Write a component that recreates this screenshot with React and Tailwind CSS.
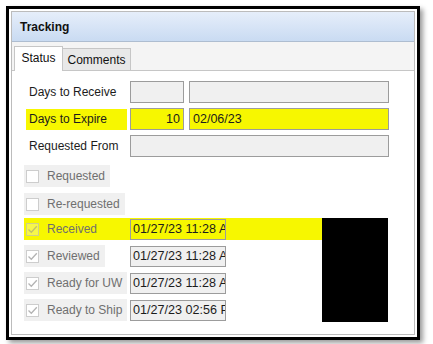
import React from 'react';

const font = { fontFamily: '"Liberation Sans", Arial, sans-serif' };

function Check({ checked, onYellow }) {
    return (
        <div className={`w-[13px] h-[13px] border flex items-center justify-center ${onYellow ? 'border-[#cfcf8a] bg-[#f7f74a]' : 'border-[#cdcdcd] bg-white'}`}>
            {checked && (
                <svg width="11" height="11" viewBox="0 0 11 11">
                    <path d="M1.5 5.5 L4.3 8.3 L9.8 2.2" fill="none" stroke={onYellow ? '#c2c26a' : '#b4b4b4'} strokeWidth="1.3" />
                </svg>
            )}
        </div>
    )
}

function CheckRow({ label, checked, date, highlight, className }) {
    return (
        <div className={`flex flex-row items-center h-[22px] ${highlight ? 'bg-[#f7f700]' : ''} ${className || ''}`}>
            <div className='w-[106px] h-full flex'>
                <div className={`h-full flex flex-row items-center pl-[2px] pr-[5px] ${highlight ? '' : 'bg-[#f0f0f0]'}`}>
                    <Check checked={checked} onYellow={highlight} />
                    <span className='ml-[8px] text-[12px] text-[#6f6f6f] whitespace-nowrap'>{label}</span>
                </div>
            </div>
            {date && (
                <div className={`w-[96px] h-[21px] border border-[#9c9c9c] overflow-hidden whitespace-nowrap flex items-center pl-[2px] text-[12.6px] text-[#1c1c1c] ${highlight ? 'bg-[#f7f700]' : 'bg-[#f0f0f0]'}`}>
                    {date}
                </div>
            )}
        </div>
    )
}

function FieldRow({ label, highlight, children, className }) {
    return (
        <div className={`flex flex-row items-center ml-[2px] ${className || ''}`}>
            <div className={`w-[101px] h-[21px] flex items-center pl-[3px] text-[12px] text-[#1c1c1c] ${highlight ? 'bg-[#f7f700]' : ''}`}>{label}</div>
            {children}
        </div>
    )
}

export default function App() {
    const box = 'h-[22px] border border-[#9c9c9c] flex items-center text-[12.5px] text-[#1c1c1c]'
    return (
        <div className='w-[433px] h-[344px] bg-white pt-[6px] pl-[6px]' style={font}>
            <div className='w-[414px] h-[334px] border-[3px] border-black p-[2px] bg-white shadow-[3px_3px_5px_rgba(0,0,0,0.4)]'>
                <div className='h-full border border-[#bcbcbc] flex flex-col'>
                    {/* title bar */}
                    <div className='h-[30px] border-b border-[#aebdd0] bg-gradient-to-b from-[#e6eefa] to-[#c9dbf2] flex items-center pl-[8px]'>
                        <span className='font-bold text-[12px] text-[#111]'>Tracking</span>
                    </div>

                    {/* tabs */}
                    <div className='h-[29px] border-b border-[#c6c6c6] bg-[#f4f4f4] flex flex-row items-end pl-[2px]'>
                        <div className='h-[25px] w-[49px] bg-white border border-b-0 border-[#c6c6c6] flex items-center justify-center text-[12px] text-[#111] mb-[-1px] pb-[3px]'>Status</div>
                        <div className='h-[22px] w-[68px] bg-[#e8e8e8] border border-b-0 border-l-0 border-[#c6c6c6] flex items-center justify-center text-[12px] text-[#111]'>Comments</div>
                    </div>

                    {/* content */}
                    <div className='flex-1 bg-white pt-[10px] pl-[12px] flex flex-col'>
                        <FieldRow label='Days to Receive'>
                            <div className={`${box} ml-[3px] w-[54px] bg-[#f0f0f0]`}></div>
                            <div className={`${box} ml-[5px] w-[200px] bg-[#f0f0f0]`}></div>
                        </FieldRow>
                        <FieldRow label='Days to Expire' highlight className='mt-[5px]'>
                            <div className={`${box} ml-[3px] w-[54px] bg-[#f7f700] justify-end pr-[3px]`}>10</div>
                            <div className={`${box} ml-[5px] w-[200px] bg-[#f7f700] pl-[3px]`}>02/06/23</div>
                        </FieldRow>
                        <FieldRow label='Requested From' className='mt-[5px]'>
                            <div className={`${box} ml-[3px] w-[259px] bg-[#f0f0f0]`}></div>
                        </FieldRow>

                        <div className='mt-[8px] flex flex-col w-[298px]'>
                            <CheckRow label='Requested' />
                            <CheckRow label='Re-requested' className='mt-[6px]' />
                        </div>

                        <div className='mt-[3px] flex flex-row'>
                            <div className='w-[298px] flex flex-col'>
                                <CheckRow label='Received' checked highlight date='01/27/23 11:28 AM' />
                                <CheckRow label='Reviewed' checked date='01/27/23 11:28 AM' className='mt-[5px]' />
                                <CheckRow label='Ready for UW' checked date='01/27/23 11:28 AM' className='mt-[5px]' />
                                <CheckRow label='Ready to Ship' checked date='01/27/23 02:56 PM' className='mt-[5px]' />
                            </div>
                            <div className='w-[66px] h-[104px] bg-black'></div>
                        </div>
                    </div>
                </div>
            </div>
        </div>
    )
}
